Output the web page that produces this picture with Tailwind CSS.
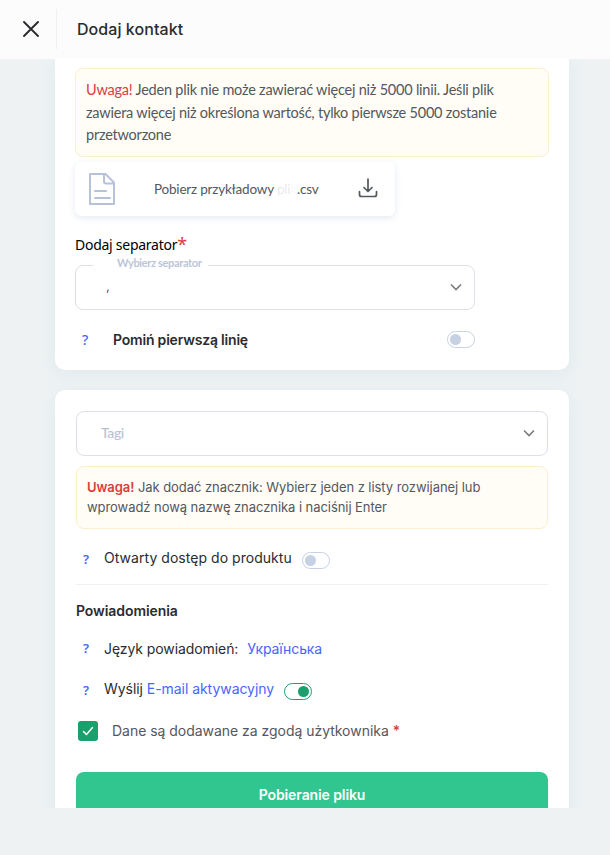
<!DOCTYPE html>
<html lang="pl">
<head>
    <meta charset="UTF-8">
    <meta name="viewport" content="width=device-width, initial-scale=1.0">
    <title>Dodaj kontakt</title>
    <script src="https://cdn.jsdelivr.net/npm/@tailwindcss/browser@4"></script>
</head>
<body class="bg-[#eef2f3] h-[855px] overflow-hidden font-['Inter',sans-serif] text-[#2b2b2f]">
    <header class="h-[59px] bg-[#fcfcfc] flex items-center pb-0.5">
        <button class="w-14 h-10 pl-[23px] cursor-pointer" aria-label="Zamknij">
            <svg class="w-4 h-4" viewBox="0 0 16 16" fill="none" stroke="#2b2b2f" stroke-width="1.900" stroke-linecap="round"><path d="M1 1l14 14M15 1L1 15"/></svg>
        </button>
        <div class="w-px h-10 bg-[#f0f0f0]"></div>
        <h1 class="ml-5 text-base leading-5 font-medium tracking-[0.06px]">Dodaj kontakt</h1>
    </header>

    <main class="h-[749px] overflow-hidden px-[55px]">
        <!-- Import file -->
        <section class="w-[514px] h-[311px] bg-white rounded-b-[10px] px-5 pt-[9px] shadow-[0_4px_16px_rgba(180,195,215,0.2)]">
            <div class="h-[89px] bg-[#fffdf5] border border-[#fbf0cb] rounded-lg px-2.5 pt-[10px] font-['Lato',sans-serif] text-[14.5px] leading-[22.5px] tracking-[-0.22px] text-[#54575e] whitespace-nowrap">
                <span class="text-[#dd3a40]">Uwaga!</span> Jeden plik nie może zawierać więcej niż 5000 linii. Jeśli plik<br>
                zawiera więcej niż określona wartość, tylko pierwsze 5000 zostanie<br>
                przetworzone
            </div>
            <a class="mt-[5px] w-80 h-[54px] flex items-center rounded-md shadow-[0_2px_6px_rgba(150,170,200,0.25)] pl-3.5 pr-[17px] font-['Lato',sans-serif] text-[13.5px] text-[#54575e]">
                <svg class="w-[26px] h-8" viewBox="0 0 26 32" fill="none" stroke="#b6c2d9" stroke-width="2"><path d="M1 1h15.500L25 9.500V31H1zM15 1v7.500q0 2 2 2h8" stroke-linejoin="round"/><path d="M6 18h11M6 25h15" stroke-linecap="round"/></svg>
                <span class="ml-[39px] whitespace-nowrap tracking-[-0.2px]">Pobierz przykładowy <span class="text-[#54575e]/15">pli<span class="text-[#54575e]/5">k</span></span>.csv</span>
                <svg class="ml-auto mb-0.5 w-5 h-5" viewBox="0 0 20 20" fill="none" stroke="#54575e" stroke-width="1.700" stroke-linecap="round" stroke-linejoin="round"><path d="M10 1v12M6 9.500l4 4 4-4M1.500 13.500v3q0 2 2 2h13q2 0 2-2v-3"/></svg>
            </a>
            <div class="mt-[18px] h-[22px] leading-[22px] text-sm font-['Noto_Sans',sans-serif] text-black flex"><span class="tracking-[-0.26px]">Dodaj separator</span><span class="text-[#dd3a40] text-lg leading-5">*</span></div>
            <div class="relative mt-[9px] w-[400px] h-[45px] border border-[#dddfeb] rounded-lg flex items-center justify-between pl-[30px] pr-3 pb-0.5">
                <span class="absolute left-[17px] top-[-11px] bg-white w-[115px] pl-[24px] h-4 leading-4 font-['Lato',sans-serif] font-bold text-[11px] tracking-[-0.35px] text-[#bcc5d8] whitespace-nowrap">Wybierz separator</span>
                <span class="text-[13px] text-[#54575e]">,</span>
                <svg class="w-3 h-3" viewBox="0 0 12 12" fill="none" stroke="#7b7b7b" stroke-width="1.600"><path d="M1 3.500l5 5 5-5"/></svg>
            </div>
            <div class="mt-5 w-[400px] h-5 flex items-center">
                <span class="ml-[7px] w-[31px] font-['Noto_Sans',sans-serif] text-sm font-medium text-[#4667ff]">?</span>
                <span class="text-sm font-semibold tracking-[-0.2px]">Pomiń pierwszą linię</span>
                <span class="ml-auto mb-0.5 w-7 h-[17px] rounded-full border border-[#c6d1e3] p-0.5"><span class="block w-[11px] h-[11px] rounded-full bg-[#c6d1e3]"></span></span>
            </div>
        </section>

        <!-- Tags, access and notifications -->
        <section class="mt-5 w-[514px] h-[460px] bg-white rounded-t-[10px] px-[21px] pt-[21px] shadow-[0_4px_16px_rgba(180,195,215,0.2)]">
            <div class="h-[45px] border border-[#dddfeb] rounded-lg flex items-center justify-between pl-6 pr-3 pb-0.5">
                <span class="font-['Lato',sans-serif] font-medium text-[14px] tracking-[-0.4px] text-[#b9c1d5]">Tagi</span>
                <svg class="w-3 h-3" viewBox="0 0 12 12" fill="none" stroke="#7b7b7b" stroke-width="1.600"><path d="M1 3.500l5 5 5-5"/></svg>
            </div>
            <div class="mt-2.5 h-[63px] bg-[#fffdf5] border border-[#fbf0cb] rounded-lg px-2.5 pt-[10px] text-[13px] leading-5 tracking-[-0.06px] text-[#54575e] whitespace-nowrap">
                <span class="text-[#dd3a40] font-semibold">Uwaga!</span> Jak dodać znacznik: Wybierz jeden z listy rozwijanej lub<br>
                wprowadź nową nazwę znacznika i naciśnij Enter
            </div>
            <div class="mt-[19px] h-[36px] flex">
                <span class="ml-[7px] w-[21px] font-['Noto_Sans',sans-serif] text-[13px] leading-[22px] font-semibold text-[#4667ff]">?</span>
                <span class="text-sm leading-5 tracking-[0.04px]">Otwarty dostęp do produktu</span>
                <span class="ml-2.5 mt-1 w-7 h-[17px] rounded-full border border-[#c6d1e3] p-0.5"><span class="block w-[11px] h-[11px] rounded-full bg-[#c6d1e3]"></span></span>
            </div>
            <div class="h-px bg-[#f1f1f2]"></div>
            <h2 class="mt-4 text-sm leading-5 font-semibold tracking-[-0.08px]">Powiadomienia</h2>
            <div class="mt-[18px] h-5 flex items-center">
                <span class="ml-[7px] w-[21px] font-['Noto_Sans',sans-serif] text-[13px] font-semibold text-[#4667ff]">?</span>
                <span class="text-sm tracking-[-0.08px]">Język powiadomień:</span>
                <a class="ml-[9px] text-sm tracking-[-0.1px] text-[#4667ff]">Українська</a>
            </div>
            <div class="mt-5 h-5 flex">
                <span class="ml-[7px] w-[21px] font-['Noto_Sans',sans-serif] text-[13px] leading-[22px] font-semibold text-[#4667ff]">?</span>
                <span class="text-sm leading-5 tracking-[-0.05px]">Wyślij <a class="text-[#4667ff]">E-mail aktywacyjny</a></span>
                <span class="ml-2.5 mt-[4px] w-7 h-[17px] rounded-full border border-[#19a06d] p-0.5 flex justify-end"><span class="w-[11px] h-[11px] rounded-full bg-[#19a06d]"></span></span>
            </div>
            <label class="mt-[22px] h-5 flex items-center">
                <span class="ml-0.5 w-5 h-5 rounded-[3px] bg-[#19a06d] flex items-center justify-center">
                    <svg class="w-3 h-3" viewBox="0 0 12 12" fill="none" stroke="#fff" stroke-width="1.500" stroke-linecap="round" stroke-linejoin="round"><path d="M1.500 6.500L4.500 9.500 10.500 2.500"/></svg>
                </span>
                <span class="ml-3.5 text-sm tracking-[-0.03px] text-[#54575e]">Dane są dodawane za zgodą użytkownika <span class="text-[#dd3a40] font-medium">*</span></span>
            </label>
            <button class="mt-[31px] w-full h-[45px] bg-[#31c58f] rounded-lg text-white text-sm font-semibold tracking-[-0.1px]">Pobieranie pliku</button>
        </section>
    </main>
</body>
</html>
